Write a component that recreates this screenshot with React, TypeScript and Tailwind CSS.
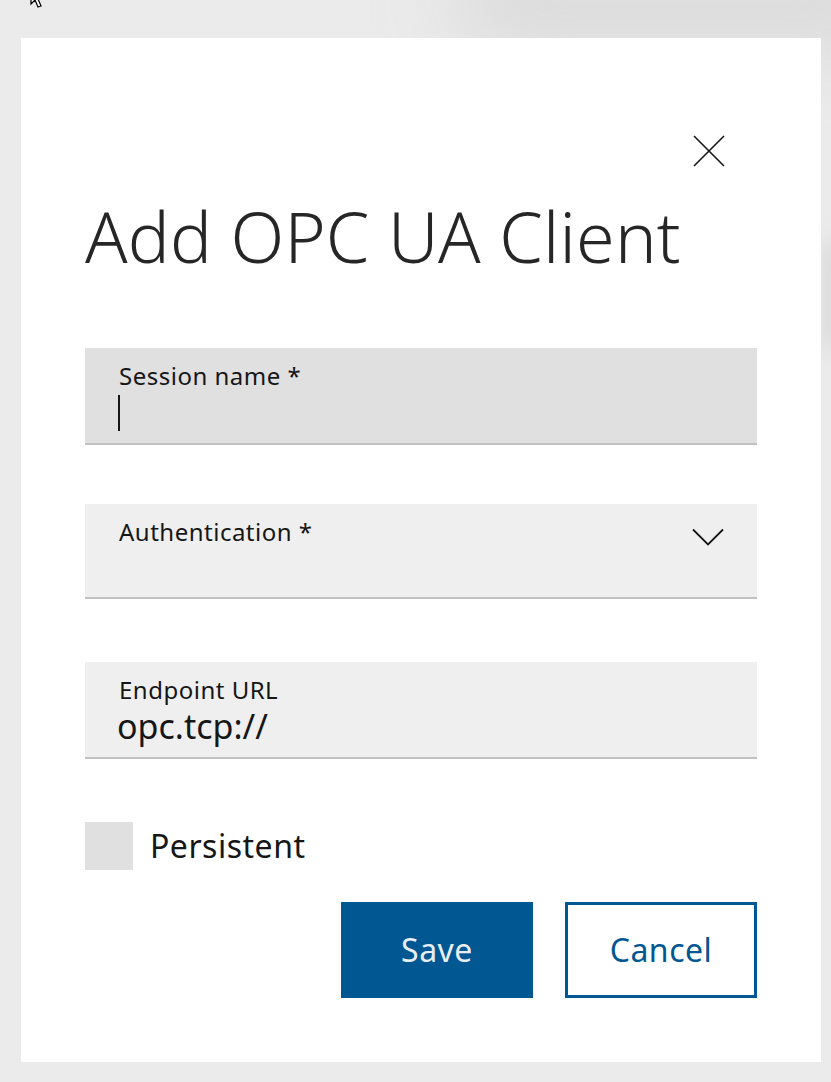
const font = { fontFamily: '"Noto Sans", "Open Sans", sans-serif' };

function CloseIcon() {
  return (
    <svg width="32" height="32" viewBox="0 0 32 32" fill="none" stroke="#161616" strokeWidth="1.6">
      <path d="M1 1 31 31M31 1 1 31" />
    </svg>
  );
}

function Chevron() {
  return (
    <svg width="32" height="18" viewBox="0 0 32 18" fill="none" stroke="#161616" strokeWidth="1.8">
      <path d="M1 1.5 16 16.5 31 1.5" />
    </svg>
  );
}

export default function App() {
  return (
    <div className="relative min-h-[1082px] w-full overflow-hidden bg-[#ebebeb]" style={font}>
      {/* soft shadows from the page behind the dialog */}
      <div className="pointer-events-none absolute right-[-80px] top-[-50px] h-[100px] w-[460px] rounded-full bg-[#d6d6d6] opacity-80 blur-2xl" />
      <div className="pointer-events-none absolute right-[-14px] top-[240px] h-[110px] w-[22px] rounded-full bg-[#d2d2d2] opacity-80 blur-md" />

      {/* mouse pointer peeking in from the top */}
      <svg className="absolute left-[30px] top-[-14px]" width="18" height="24" viewBox="0 0 18 24" fill="white" stroke="#000" strokeWidth="1.2">
        <path d="M1 1v17l4-4 3 7 3-1-3-7h6z" />
      </svg>

      <div className="relative ml-[21px] mt-[38px] flex h-[1024px] w-[800px] flex-col bg-white px-[64px] pt-[97px]">
        <div className="flex justify-end pr-[32px]">
          <button aria-label="Close" className="flex h-[32px] w-[32px] items-center justify-center">
            <CloseIcon />
          </button>
        </div>

        <h1 className="mt-[29px] text-[70px] font-light leading-[80px] tracking-[0.2px] text-[#262626]">
          Add OPC UA Client
        </h1>

        <div className="mt-[72px] flex h-[97px] flex-col border-b-2 border-[#c1c1c1] bg-[#e0e0e0] px-[34px] pt-[12px]">
          <label className="text-[24px] leading-[32px] tracking-[0.5px] text-[#161616]">Session name *</label>
          <div className="mt-[3px] h-[36px] w-[2px] -translate-x-[1px] bg-[#161616]" />
        </div>

        <div className="mt-[59px] flex h-[95px] items-start justify-between border-b-2 border-[#c1c1c1] bg-[#efefef] pl-[34px] pr-[33px] pt-[12px]">
          <span className="text-[24px] leading-[32px] tracking-[0.5px] text-[#161616]">Authentication *</span>
          <div className="mt-[12px]">
            <Chevron />
          </div>
        </div>

        <div className="mt-[63px] flex h-[97px] flex-col border-b-2 border-[#c1c1c1] bg-[#efefef] px-[34px] pt-[12px]">
          <span className="text-[24px] leading-[32px] tracking-[0.5px] text-[#161616]">Endpoint URL</span>
          <span className="-ml-[2px] text-[34px] leading-[40px] text-[#161616]">opc.tcp://</span>
        </div>

        <label className="mt-[63px] flex items-center gap-[17px]">
          <span className="h-[48px] w-[48px] bg-[#e0e0e0]" />
          <span className="text-[32px] leading-[40px] tracking-[0.5px] text-[#161616]">Persistent</span>
        </label>

        <div className="mt-[32px] flex justify-end gap-[32px]">
          <button className="h-[96px] w-[192px] bg-[#005792] text-[32px] tracking-[0.5px] text-[#e8eef4]">Save</button>
          <button className="h-[96px] w-[192px] border-[3px] border-[#005792] bg-white text-[32px] tracking-[0.5px] text-[#005792]">
            Cancel
          </button>
        </div>
      </div>
    </div>
  );
}
